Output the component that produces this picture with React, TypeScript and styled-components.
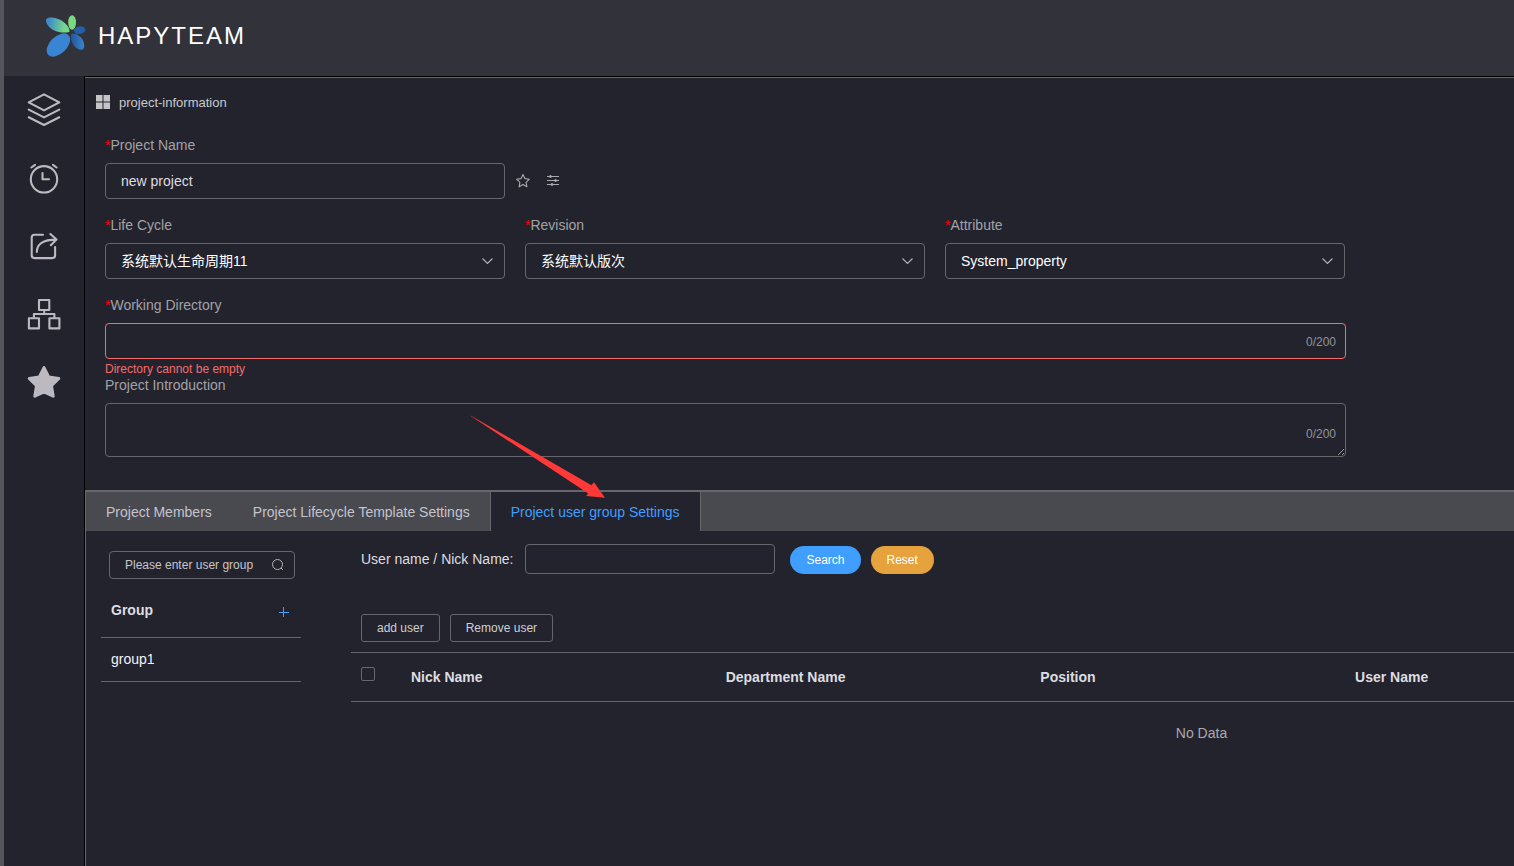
import React from "react";
import styled, { createGlobalStyle } from "styled-components";

const line = "#66666c";

const GlobalStyle = createGlobalStyle`
  * { box-sizing: border-box; }
  body {
    margin: 0;
    background: #23232d;
    color: #dddde0;
    font: 14px/20px "Liberation Sans", Arial, "Noto Sans CJK SC", sans-serif;
  }
  button, input, select, textarea { font: inherit; color: inherit; margin: 0; }
  button { cursor: pointer; }
`;

const Page = styled.div`
  display: flex;
  flex-direction: column;
  min-height: 100vh;
  border-left: 4px solid #55565d;
  overflow: hidden;
`;

const Header = styled.header`
  display: flex;
  align-items: center;
  gap: 10px;
  height: 76px;
  padding: 0 41px 4px;
  background: #32323b;
`;

const Brand = styled.h1`
  margin: 0;
  font-size: 24px;
  line-height: 28px;
  font-weight: 400;
  letter-spacing: 2px;
  color: #fff;
`;

const Body = styled.div`
  display: flex;
  flex: 1;
`;

const Sidebar = styled.nav`
  display: flex;
  flex-direction: column;
  flex: 0 0 81px;
  border-right: 1px solid #000;
`;

const NavLink = styled.a`
  display: flex;
  align-items: center;
  justify-content: center;
  height: 68px;
  color: #bcbac0;
`;

const Main = styled.main`
  flex: 1;
  min-width: 0;
  border-top: 1px solid #000;
`;

const InfoPanel = styled.section`
  border-top: 1px solid ${line};
  padding: 15px 20px 33px;
`;

const PanelTitle = styled.h2`
  display: flex;
  align-items: center;
  gap: 9px;
  margin: 0 0 22px -9px;
  font-size: 13px;
  line-height: 20px;
  font-weight: 400;
  color: #c9c9cd;
`;

const Form = styled.form`
  display: flex;
  flex-direction: column;
  gap: 16px;
  max-width: 1241px;
`;

const Columns = styled.div`
  display: grid;
  grid-template-columns: repeat(3, minmax(0, 400px));
  gap: 20px;
`;

const Field = styled.div`
  display: flex;
  flex-direction: column;
  gap: 8px;
`;

const Label = styled.label`
  color: #a2a2a7;
`;

const Star = styled.span`
  color: #ff0000;
`;

const Control = styled.div`
  position: relative;
  display: flex;
  align-items: center;
`;

const TextInput = styled.input<{ $invalid?: boolean; $size?: "small" | "medium" }>`
  width: 100%;
  height: ${(p) => (p.$size === "small" ? 28 : p.$size === "medium" ? 30 : 36)}px;
  padding: 0 15px;
  border: 1px solid ${(p) => (p.$invalid ? "#f56c6c" : line)};
  border-radius: 4px;
  background: transparent;
  font-size: ${(p) => (p.$size === "small" ? 12 : 14)}px;
  outline: none;
  &::placeholder { color: #c6c6cb; opacity: 1; }
`;

const Select = styled.select`
  width: 100%;
  height: 36px;
  padding: 0 35px 0 15px;
  border: 1px solid ${line};
  border-radius: 4px;
  background: #23232d;
  color: #fff;
  appearance: none;
  outline: none;
`;

const TextArea = styled.textarea`
  display: block;
  width: 100%;
  height: 54px;
  padding: 5px 15px;
  border: 1px solid ${line};
  border-radius: 4px;
  background: transparent;
  resize: vertical;
  outline: none;
`;

const Suffix = styled.span`
  position: absolute;
  right: 10px;
  display: flex;
  color: #b4b4ba;
  pointer-events: none;
`;

const Count = styled(Suffix)<{ $low?: boolean }>`
  bottom: ${(p) => (p.$low ? 13 : 7)}px;
  font-size: 12px;
  color: #909399;
`;

const ErrorText = styled.p`
  height: 16px;
  margin: -8px 0 -16px;
  padding-top: 4px;
  font-size: 12px;
  line-height: 12px;
  color: #f56c6c;
`;

const IconButton = styled.button`
  display: flex;
  align-items: center;
  justify-content: center;
  flex: none;
  width: 30px;
  height: 30px;
  padding: 0;
  border: 0;
  background: none;
  color: #a9a9b0;
`;

const NameRow = styled.div`
  display: flex;
  align-items: center;
`;

const NameInput = styled(TextInput)`
  flex: 0 1 400px;
  margin-right: 3px;
`;

const Tabs = styled.section`
  border-top: 2px solid ${line};
  border-left: 1px solid ${line};
  min-height: 376px;
`;

const TabBar = styled.div`
  display: flex;
  height: 39px;
  background: #494950;
`;

const Tab = styled.button<{ $active?: boolean }>`
  position: relative;
  height: 39px;
  margin-left: -1px;
  padding: 0 20px;
  border: solid ${(p) => (p.$active ? line : "transparent")};
  border-width: 0 1px;
  background: ${(p) => (p.$active ? "#23232d" : "none")};
  color: ${(p) => (p.$active ? "#409eff" : "#c4c4cc")};
  white-space: nowrap;
`;

const Pointer = styled.svg`
  position: absolute;
  left: -22px;
  top: -78px;
  pointer-events: none;
  overflow: visible;
`;

const TabContent = styled.div`
  display: flex;
  gap: 50px;
  padding: 13px 0 0 15px;
`;

const Groups = styled.aside`
  flex: 0 0 200px;
  padding-top: 7px;
`;

const GroupSearch = styled(Control)`
  margin: 0 6px 0 8px;
`;

const GroupHead = styled.div`
  display: flex;
  align-items: center;
  justify-content: space-between;
  height: 59px;
  padding: 4px 2px 0 10px;
  border-bottom: 1px solid ${line};
`;

const GroupName = styled.h3`
  margin: 0;
  font-size: 14px;
  line-height: 20px;
`;

const AddButton = styled(IconButton)`
  align-self: flex-end;
  margin-bottom: 10px;
  color: #409eff;
`;

const GroupItem = styled.a`
  display: flex;
  align-items: center;
  height: 44px;
  padding: 0 10px 2px;
  border-bottom: 1px solid ${line};
  color: #f4f4f6;
  text-decoration: none;
`;

const Users = styled.div`
  flex: 1;
  min-width: 0;
`;

const Filter = styled.form`
  display: flex;
  align-items: center;
  padding-left: 10px;
`;

const FilterInput = styled(TextInput)`
  flex: 0 1 250px;
  margin: 0 15px 0 12px;
`;

const Pill = styled.button<{ $tone: string }>`
  height: 28px;
  margin: 2px 10px 0 0;
  padding: 0 16px;
  border: 0;
  border-radius: 14px;
  background: ${(p) => p.$tone};
  color: #fff;
  font-size: 12px;
`;

const Actions = styled.div`
  display: flex;
  gap: 10px;
  padding: 40px 10px 10px;
`;

const Action = styled.button`
  height: 28px;
  padding: 0 15px;
  border: 1px solid ${line};
  border-radius: 3px;
  background: transparent;
  color: #cfcfd4;
  font-size: 12px;
`;

const Scroller = styled.div`
  overflow: hidden;
`;

const Table = styled.table`
  width: 1701px;
  border-collapse: collapse;
  table-layout: fixed;
`;

const HeadCell = styled.th<{ $width?: string }>`
  width: ${(p) => p.$width || "auto"};
  height: 49px;
  padding: 0 10px;
  border: solid ${line};
  border-width: 1px 0;
  text-align: left;
`;

const Empty = styled.td`
  height: 62px;
  padding: 0;
  text-align: center;
  color: #a9a9ae;
`;

const Check = styled.input`
  display: block;
  width: 14px;
  height: 14px;
  margin: 0 0 6px -4px;
  border: 1px solid ${line};
  border-radius: 2px;
  appearance: none;
`;

const CheckCell = styled(HeadCell)`
  padding-left: 14px;
`;

const Logo = () => (
  <svg width="43" height="44" viewBox="45 14 43 44" aria-hidden="true">
    <defs>
      <linearGradient id="leaf" x1="0" y1="0.4" x2="1" y2="0.5">
        <stop offset="0.1" stopColor="#3f8acb" />
        <stop offset="0.8" stopColor="#74d78a" />
      </linearGradient>
      <linearGradient id="deep" x1="0" y1="0" x2="1" y2="0">
        <stop offset="0" stopColor="#22569a" />
        <stop offset="1" stopColor="#3b84d2" />
      </linearGradient>
    </defs>
    <path d="M69.300 32C62 33.700 54 31.500 50 27.800C46.300 24 45.300 20.500 46.500 18.700C49 16.300 57 17.300 62 20.800C67.500 24.500 70.300 29 69.300 32Z" fill="url(#leaf)" />
    <ellipse cx="72.100" cy="22.500" rx="3.900" ry="7.300" fill="#79d982" />
    <ellipse cx="79.600" cy="30.200" rx="5.700" ry="3.800" transform="rotate(-8 79.600 30.200)" fill="#2360a8" />
    <path d="M71.300 33.800C74.500 32.600 80.500 35.500 83 40.500C84.800 44.500 84.600 48.500 82.600 49.600C79.500 50.600 74.800 48 72.600 43.500C70.900 40 70.500 36.300 71.300 33.800Z" fill="url(#deep)" />
    <ellipse cx="58.400" cy="45" rx="14.200" ry="8.500" transform="rotate(-45 58.400 45)" fill="#3a84d4" />
  </svg>
);

const navIcons = [
  {
    name: "Layers",
    art: (
      <>
        <path d="M18 2.400L33.300 10.400L18 18.400L2.700 10.400Z" />
        <path d="M2.700 17.600L18 25.400L33.300 17.600M2.700 25.300L18 33L33.300 25.300" />
      </>
    ),
  },
  {
    name: "Schedule",
    art: (
      <>
        <circle cx="18" cy="19.300" r="13.200" />
        <path d="M5.400 7.500L9 4.900M27 4.900L30.600 7.500M16.500 13V19.300H23" />
      </>
    ),
  },
  {
    name: "Share",
    art: (
      <path d="M17 6.800H8.500Q5.700 6.800 5.700 9.600V27.300Q5.700 30.100 8.500 30.100H26.300Q29.100 30.100 29.100 27.300V19M10.800 24C10.800 16 17 11.600 30 11.600M24.400 6L30.500 11.600L24.800 17.200" />
    ),
  },
  {
    name: "Structure",
    art: (
      <path d="M13 4H23.300V14H13ZM2.900 22.300H13V32.400H2.900ZM23.400 22.300H33.400V32.400H23.400ZM18.200 14V18M7.900 22V18H28.400V22" />
    ),
  },
  {
    name: "Favorites",
    art: (
      <path
        d="M18 3.600L22.700 13L32.800 14.500L25.500 21.700L27.200 32.200L18 27.800L8.800 32.200L10.500 21.700L3.200 14.500L13.300 13Z"
        fill="currentColor"
        strokeWidth="3"
      />
    ),
  },
];

const ChevronDown = () => (
  <Suffix>
    <svg width="14" height="14" viewBox="0 0 14 14" fill="none" stroke="currentColor" strokeWidth="1.100">
      <path d="M1.500 4.500L6.500 9.500L11.500 4.500" />
    </svg>
  </Suffix>
);

const Required = () => <Star>*</Star>;

const selects = [
  { id: "cycle", label: "Life Cycle", value: "系统默认生命周期11" },
  { id: "revision", label: "Revision", value: "系统默认版次" },
  { id: "attribute", label: "Attribute", value: "System_property" },
];

export default function App() {
  return (
    <>
      <GlobalStyle />
      <Page>
        <Header>
          <Logo />
          <Brand>HAPYTEAM</Brand>
        </Header>
        <Body>
          <Sidebar>
            {navIcons.map((icon) => (
              <NavLink key={icon.name} href="#" aria-label={icon.name}>
                <svg width="36" height="36" viewBox="0 0 36 36" fill="none" stroke="currentColor" strokeWidth="2.100" strokeLinejoin="round" strokeLinecap="round">
                  {icon.art}
                </svg>
              </NavLink>
            ))}
          </Sidebar>
          <Main>
            <InfoPanel>
              <PanelTitle>
                <svg width="14" height="16" viewBox="0 0 14 16" fill="#c4c4c4" aria-hidden="true">
                  <path d="M0 0H6.500V6.500H0ZM7.500 0H14V6.500H7.500ZM0 7.500H6.500V14H0ZM7.500 7.500H14V14H7.500Z" />
                </svg>
                project-information
              </PanelTitle>
              <Form>
                <Field>
                  <Label htmlFor="name"><Required />Project Name</Label>
                  <NameRow>
                    <NameInput id="name" defaultValue="new project" />
                    <IconButton type="button" aria-label="Favorite">
                      <svg width="16" height="16" viewBox="0 0 16 16" fill="none" stroke="currentColor" strokeWidth="1.100" strokeLinejoin="round">
                        <path d="M8 1.500L9.900 5.600L14.400 6.200L11.100 9.300L11.900 13.800L8 11.600L4.100 13.800L4.900 9.300L1.600 6.200L6.100 5.600Z" />
                      </svg>
                    </IconButton>
                    <IconButton type="button" aria-label="Options">
                      <svg width="14" height="14" viewBox="0 0 14 14" fill="currentColor" stroke="currentColor">
                        <path d="M1 2.500H13M1 6.500H13M1 10.500H13" />
                        <circle cx="4.500" cy="2.500" r="1" />
                        <circle cx="9.500" cy="6.500" r="1" />
                        <circle cx="6" cy="10.500" r="1" />
                      </svg>
                    </IconButton>
                  </NameRow>
                </Field>
                <Columns>
                  {selects.map((s) => (
                    <Field key={s.id}>
                      <Label htmlFor={s.id}><Required />{s.label}</Label>
                      <Control>
                        <Select id={s.id} defaultValue={s.value}>
                          <option>{s.value}</option>
                        </Select>
                        <ChevronDown />
                      </Control>
                    </Field>
                  ))}
                </Columns>
                <Field>
                  <Label htmlFor="directory"><Required />Working Directory</Label>
                  <Control>
                    <TextInput id="directory" $invalid maxLength={200} aria-describedby="directory-error" />
                    <Count>0/200</Count>
                  </Control>
                  <ErrorText id="directory-error">Directory cannot be empty</ErrorText>
                </Field>
                <Field>
                  <Label htmlFor="intro">Project Introduction</Label>
                  <Control>
                    <TextArea id="intro" maxLength={200} />
                    <Count $low>0/200</Count>
                  </Control>
                </Field>
              </Form>
            </InfoPanel>
            <Tabs>
              <TabBar role="tablist">
                <Tab role="tab">Project Members</Tab>
                <Tab role="tab">Project Lifecycle Template Settings</Tab>
                <Tab role="tab" aria-selected $active>
                  Project user group Settings
                  <Pointer width="138" height="86" viewBox="469 414 138 86" aria-hidden="true">
                    <path d="M470 415.600L471.400 416L591.500 485.300L594 482.300L605 497.700L586.300 496L588 493.300Z" fill="#ff3838" />
                  </Pointer>
                </Tab>
              </TabBar>
              <TabContent>
                <Groups>
                  <GroupSearch>
                    <TextInput $size="small" placeholder="Please enter user group" aria-label="User group" />
                    <Suffix>
                      <svg width="14" height="14" viewBox="0 0 14 14" fill="none" stroke="currentColor">
                        <circle cx="6.500" cy="6.500" r="5" />
                        <path d="M10 10L12 12" />
                      </svg>
                    </Suffix>
                  </GroupSearch>
                  <GroupHead>
                    <GroupName>Group</GroupName>
                    <AddButton type="button" aria-label="Add group">
                      <svg width="10" height="10" viewBox="0 0 10 10" stroke="currentColor">
                        <path d="M4.500 0V10M0 5.500H10" />
                      </svg>
                    </AddButton>
                  </GroupHead>
                  <GroupItem href="#">group1</GroupItem>
                </Groups>
                <Users>
                  <Filter>
                    <label htmlFor="user">User name / Nick Name:</label>
                    <FilterInput id="user" $size="medium" />
                    <Pill type="button" $tone="#409eff">Search</Pill>
                    <Pill type="button" $tone="#e6a23c">Reset</Pill>
                  </Filter>
                  <Actions>
                    <Action type="button">add user</Action>
                    <Action type="button">Remove user</Action>
                  </Actions>
                  <Scroller>
                    <Table>
                      <thead>
                        <tr>
                          <CheckCell $width="50px">
                            <Check type="checkbox" aria-label="Select all" />
                          </CheckCell>
                          <HeadCell $width="18.5%">Nick Name</HeadCell>
                          <HeadCell $width="18.5%">Department Name</HeadCell>
                          <HeadCell $width="18.5%">Position</HeadCell>
                          <HeadCell>User Name</HeadCell>
                        </tr>
                      </thead>
                      <tbody>
                        <tr>
                          <Empty colSpan={5}>No Data</Empty>
                        </tr>
                      </tbody>
                    </Table>
                  </Scroller>
                </Users>
              </TabContent>
            </Tabs>
          </Main>
        </Body>
      </Page>
    </>
  );
}
